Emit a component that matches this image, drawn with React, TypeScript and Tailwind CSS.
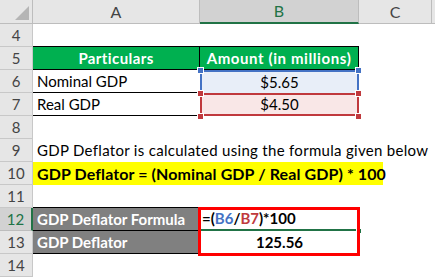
import React from "react";

function RowHead({ n, active }: { n: number; active?: boolean }) {
  return (
    <div
      className={
        active
          ? "w-[33px] h-full shrink-0 flex items-center justify-center bg-[#d2d2d2] border-b border-[#bdbdbd] border-r-2 border-r-[#217346] text-[#217346] text-[15px]"
          : "w-[33px] h-full shrink-0 flex items-center justify-center bg-[#e6e6e6] border-b border-r border-[#c8c8c8] text-[#444] text-[15px]"
      }
    >
      {n}
    </div>
  );
}

export default function App() {
  return (
    <div className="relative w-[435px] h-[277px] bg-white overflow-hidden font-['Lato',sans-serif] text-[15px] text-black leading-none">
      {/* column header */}
      <div className="flex h-[24px]">
        <div className="relative w-[33px] shrink-0 bg-[#e6e6e6] border-r border-b border-[#bdbdbd]">
          <div className="absolute right-[3px] bottom-[3px] w-0 h-0 border-l-[14px] border-l-transparent border-b-[14px] border-b-[#b5b5b5]" />
        </div>
        <div className="w-[167px] shrink-0 flex items-center justify-center bg-[#e6e6e6] border-r border-b border-[#bdbdbd] text-[#444] text-[16px]">
          A
        </div>
        <div className="w-[159px] shrink-0 flex items-center justify-center bg-[#d2d2d2] border-r border-r-[#bdbdbd] border-b-2 border-b-[#217346] text-[#217346] text-[16px]">
          B
        </div>
        <div className="w-[73px] shrink-0 flex items-center justify-center bg-[#e6e6e6] border-r border-b border-[#bdbdbd] text-[#444] text-[16px]">
          C
        </div>
        <div className="flex-1 bg-[#e6e6e6] border-b border-[#bdbdbd]" />
      </div>

      {/* row 4 */}
      <div className="flex h-[23px]">
        <RowHead n={4} />
        <div className="w-[167px] shrink-0 border-b border-black" />
        <div className="w-[159px] shrink-0 border-b border-black" />
      </div>

      {/* row 5 */}
      <div className="flex h-[23px]">
        <RowHead n={5} />
        <div className="w-[167px] shrink-0 flex items-center justify-center bg-[#00b050] border-r border-b border-black text-white font-bold tracking-[0.4px]">
          Particulars
        </div>
        <div className="w-[159px] shrink-0 flex items-center justify-center bg-[#00b050] border-r border-b border-black text-white font-bold tracking-[0.6px]">
          Amount (in millions)
        </div>
      </div>

      {/* row 6 */}
      <div className="flex h-[23px]">
        <RowHead n={6} />
        <div className="w-[167px] shrink-0 flex items-center pl-[4px] border-b border-black">
          Nominal GDP
        </div>
        <div className="w-[159px] shrink-0 flex items-center justify-center bg-[#e8eef8] border-2 border-b-0 border-[#4472c4]">
          $5.65
        </div>
      </div>

      {/* row 7 */}
      <div className="flex h-[23px]">
        <RowHead n={7} />
        <div className="w-[167px] shrink-0 flex items-center pl-[4px] border-b border-black">
          Real GDP
        </div>
        <div className="w-[159px] shrink-0 flex items-center justify-center bg-[#f9e7e7] border-2 border-[#c0393d]">
          $4.50
        </div>
      </div>

      {/* row 8 */}
      <div className="flex h-[23px]">
        <RowHead n={8} />
      </div>

      {/* row 9 */}
      <div className="flex h-[23px]">
        <RowHead n={9} />
        <div className="flex items-center pl-[4px] whitespace-nowrap tracking-[0.3px]">
          GDP Deflator is calculated using the formula given below
        </div>
      </div>

      {/* row 10 */}
      <div className="flex h-[23px]">
        <RowHead n={10} />
        <div className="w-[350px] shrink-0 flex items-center pl-[4px] bg-[#ffff00] font-bold text-[16px] tracking-[0.1px] whitespace-nowrap">
          GDP Deflator = (Nominal GDP / Real GDP) * 100
        </div>
      </div>

      {/* row 11 */}
      <div className="flex h-[23px]">
        <RowHead n={11} />
        <div className="w-[167px] shrink-0 border-b border-black" />
      </div>

      {/* row 12 */}
      <div className="flex h-[23px]">
        <RowHead n={12} active />
        <div className="w-[167px] shrink-0 flex items-center pl-[4px] bg-[#808080] border-b border-black text-white font-bold">
          GDP Deflator Formula
        </div>
        <div className="w-[159px] shrink-0 flex items-center pl-[2px] border-b-2 border-[#217346] font-bold">
          =(<span className="text-[#4472c4]">B6</span>/
          <span className="text-[#c0393d]">B7</span>)*100
        </div>
      </div>

      {/* row 13 */}
      <div className="flex h-[23px]">
        <RowHead n={13} />
        <div className="w-[167px] shrink-0 flex items-center pl-[4px] bg-[#808080] border-b border-black text-white font-bold">
          GDP Deflator
        </div>
        <div className="w-[159px] shrink-0 flex items-center justify-center font-bold">
          125.56
        </div>
      </div>

      {/* row 14 */}
      <div className="flex h-[23px]">
        <RowHead n={14} />
      </div>

      {/* reference handles */}
      <div className="absolute left-[197px] top-[67px] w-[7px] h-[7px] bg-[#4472c4] border border-white" />
      <div className="absolute left-[355px] top-[67px] w-[7px] h-[7px] bg-[#4472c4] border border-white" />
      <div className="absolute left-[197px] top-[90px] w-[7px] h-[7px] bg-[#c0393d] border border-white" />
      <div className="absolute left-[355px] top-[90px] w-[7px] h-[7px] bg-[#c0393d] border border-white" />
      <div className="absolute left-[197px] top-[113px] w-[7px] h-[7px] bg-[#c0393d] border border-white" />
      <div className="absolute left-[355px] top-[113px] w-[7px] h-[7px] bg-[#c0393d] border border-white" />

      {/* selection fill handle */}
      <div className="absolute left-[356px] top-[228px] w-[6px] h-[6px] bg-[#217346] border border-white" />

      {/* highlight box */}
      <div className="absolute left-[198px] top-[207px] w-[162px] h-[49px] border-[3px] border-[#ff0000]" />
    </div>
  );
}
